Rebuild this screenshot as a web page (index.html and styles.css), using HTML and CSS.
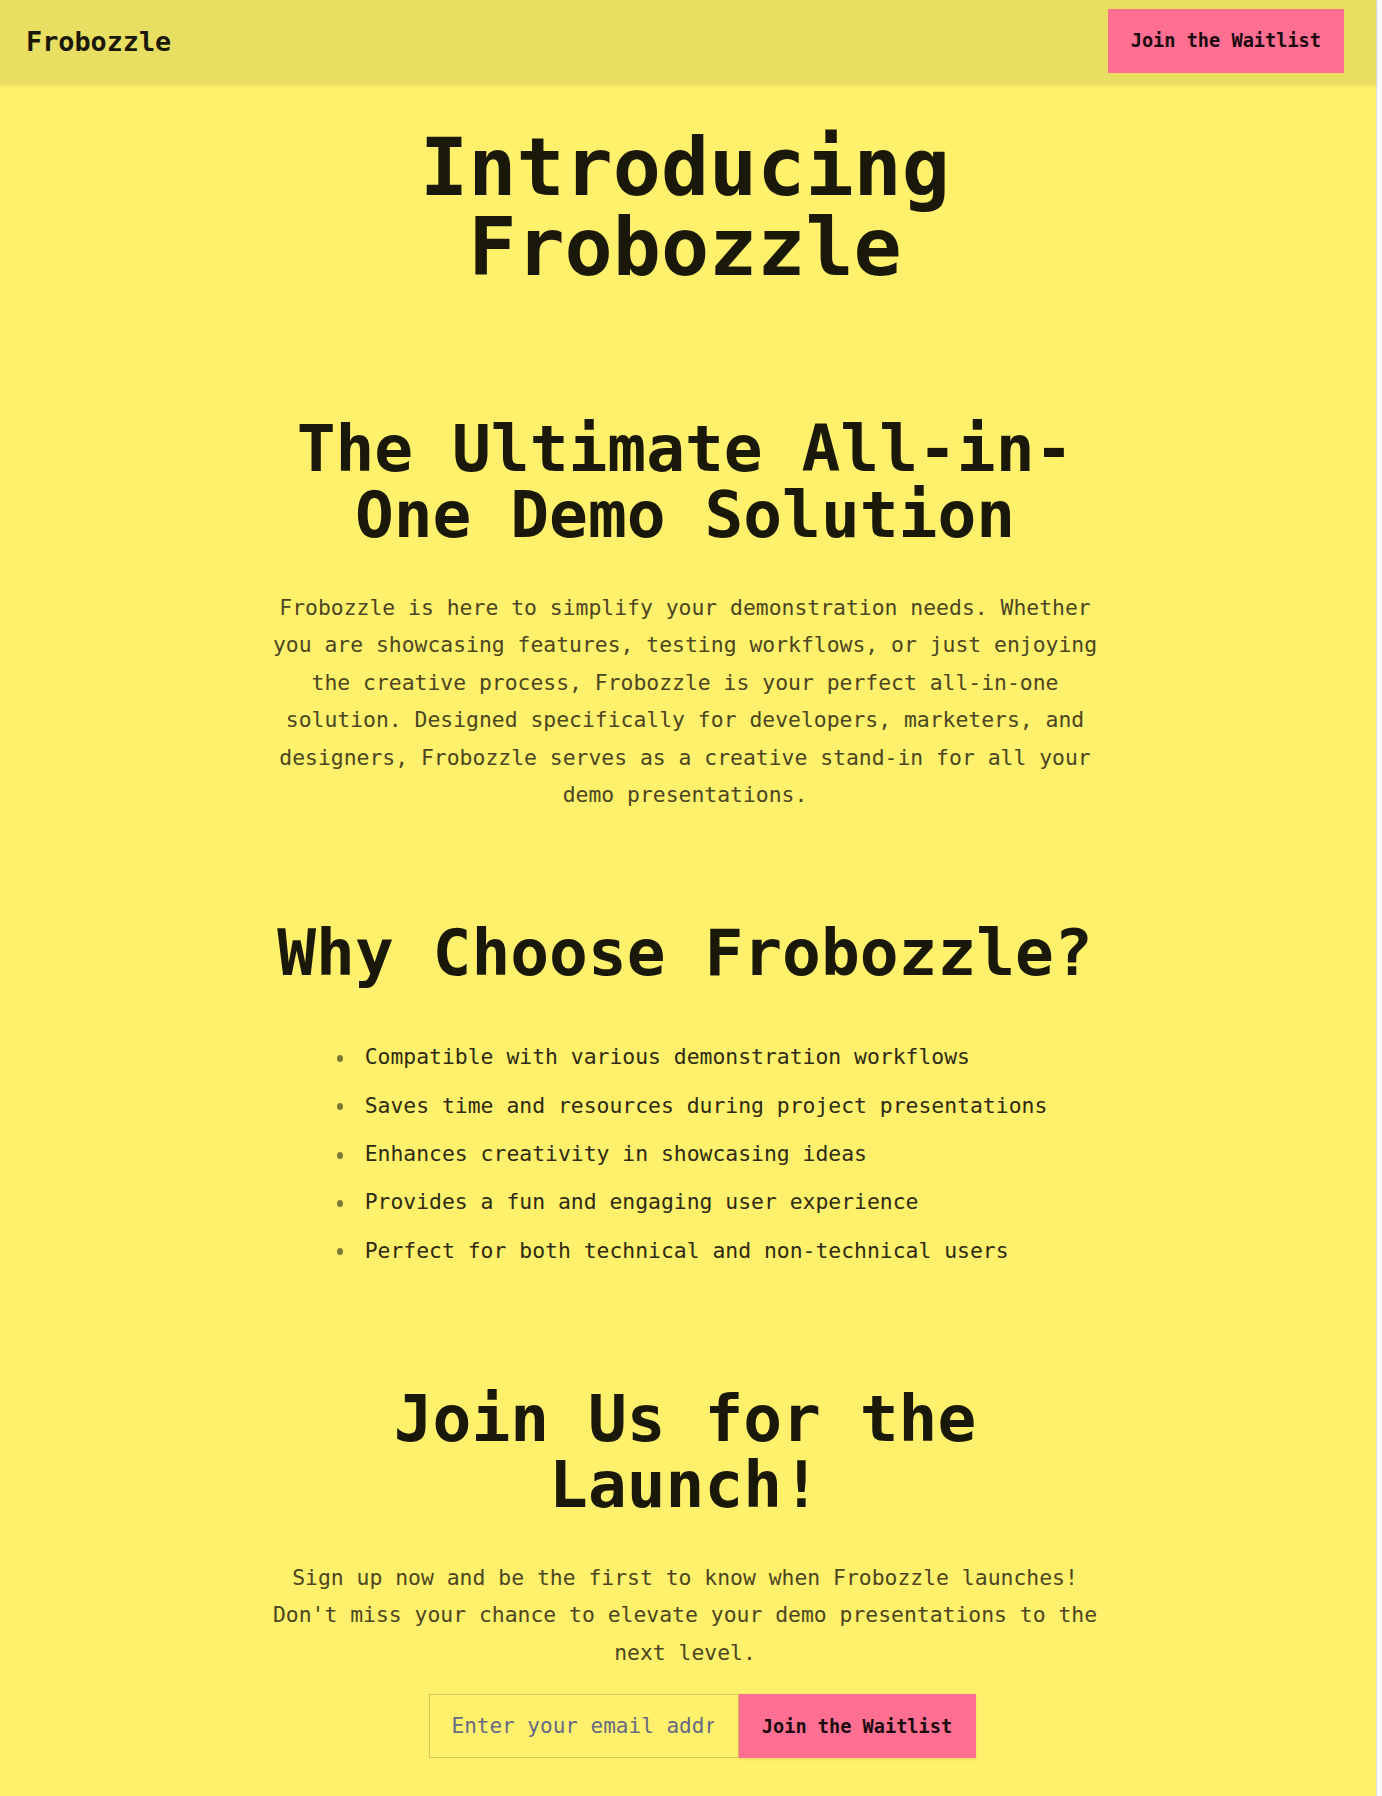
FILE: index.html
```html
<!DOCTYPE html>
<html lang="en">
<head>
<meta charset="utf-8">
<title>Frobozzle</title>
<link rel="stylesheet" href="styles.css">
</head>
<body>
<div class="page">
  <header class="topbar">
    <div class="logo">Frobozzle</div>
    <a class="btn btn-top" href="#signup">Join the Waitlist</a>
  </header>
  <main class="main">
    <section class="hero">
      <h1 class="hero-title">Introducing Frobozzle</h1>
    </section>
    <section class="about">
      <h2 class="section-title">The Ultimate All-in-One Demo Solution</h2>
      <p class="lead">Frobozzle is here to simplify your demonstration needs. Whether you are showcasing features, testing workflows, or just enjoying the creative process, Frobozzle is your perfect all-in-one solution. Designed specifically for developers, marketers, and designers, Frobozzle serves as a creative stand-in for all your demo presentations.</p>
    </section>
    <section class="features">
      <h2 class="section-title">Why Choose Frobozzle?</h2>
      <div class="list-wrap">
        <ul class="feature-list">
          <li>Compatible with various demonstration workflows</li>
          <li>Saves time and resources during project presentations</li>
          <li>Enhances creativity in showcasing ideas</li>
          <li>Provides a fun and engaging user experience</li>
          <li>Perfect for both technical and non-technical users</li>
        </ul>
      </div>
    </section>
    <section class="signup" id="signup">
      <h2 class="section-title">Join Us for the Launch!</h2>
      <p class="lead lead-signup">Sign up now and be the first to know when Frobozzle launches! Don't miss your chance to elevate your demo presentations to the next level.</p>
      <form class="signup-form">
        <input class="email" type="email" placeholder="Enter your email address">
        <button class="btn btn-form" type="button">Join the Waitlist</button>
      </form>
    </section>
  </main>
</div>
</body>
</html>
```

FILE: styles.css
```css
html {
  background: #f9f9f9;
}
body {
  margin: 0;
  font-family: "DejaVu Sans Mono", "Liberation Mono", monospace;
  color: #1a1808;
}
.page {
  width: 1376px;
  min-height: 1796px;
  background: #fff16b;
  box-shadow: 1px 0 0 #dcdcdc;
}
.topbar {
  height: 84px;
  box-sizing: border-box;
  display: flex;
  align-items: center;
  justify-content: space-between;
  padding: 0 32px 0 26px;
  background: #e8de62;
  box-shadow: 0 2px 4px rgba(80, 70, 0, 0.12);
  position: relative;
}
.logo {
  font-size: 26.8px;
  font-weight: bold;
  color: #1a1808;
  margin-top: -2px;
}
.btn {
  display: inline-block;
  background: #ff6f91;
  color: #1a0a10;
  font-family: "DejaVu Sans Mono", "Liberation Mono", monospace;
  font-weight: bold;
  font-size: 18.6px;
  text-decoration: none;
  border: none;
  box-sizing: border-box;
  cursor: pointer;
}
.btn-top {
  height: 64px;
  line-height: 64px;
  padding: 0 23px;
  margin-top: -3px;
}
.main {
  width: 840px;
  margin: 0 0 0 calc(50% - 423px);
  padding-top: 44px;
  text-align: center;
}
.hero-title {
  margin: 0;
  font-size: 80px;
  line-height: 80px;
  font-weight: bold;
}
.about {
  margin-top: 128px;
}
.section-title {
  margin: 0;
  font-size: 64.5px;
  line-height: 66px;
  font-weight: bold;
}
.lead {
  margin: 41px 0 0;
  font-size: 21.4px;
  line-height: 37.4px;
  color: #4b4621;
}
.features {
  margin-top: 107px;
}
.list-wrap {
  margin-top: 52px;
}
.feature-list {
  display: inline-block;
  text-align: left;
  margin: 0;
  padding-left: 42px;
  font-size: 21.4px;
  line-height: 37.4px;
  color: #2e2b12;
  list-style: none;
}
.feature-list li {
  margin-bottom: 10.9px;
}
.feature-list li:last-child {
  margin-bottom: 0;
}
.feature-list li::before {
  content: "";
  display: inline-block;
  width: 6px;
  height: 7px;
  border-radius: 50%;
  background: #7d7838;
  margin-left: -28px;
  margin-right: 22px;
  vertical-align: middle;
}
.signup {
  margin-top: 117px;
}
.lead-signup {
  margin-top: 41px;
}
.signup-form {
  margin-top: 23px;
  display: flex;
  justify-content: center;
  padding-left: 34px;
}
.email {
  width: 310px;
  height: 64px;
  box-sizing: border-box;
  padding: 0 24px 0 22px;
  border: 1px solid #d3c55a;
  background: #fff16b;
  font-family: "DejaVu Sans Mono", "Liberation Mono", monospace;
  font-size: 21px;
  color: #1a1808;
  outline: none;
}
.email::placeholder {
  color: #666a84;
  opacity: 1;
}
.btn-form {
  width: 237px;
  height: 64px;
  padding: 0 22px;
  box-shadow: 0 1px 3px rgba(120, 60, 60, 0.15);
}
```
